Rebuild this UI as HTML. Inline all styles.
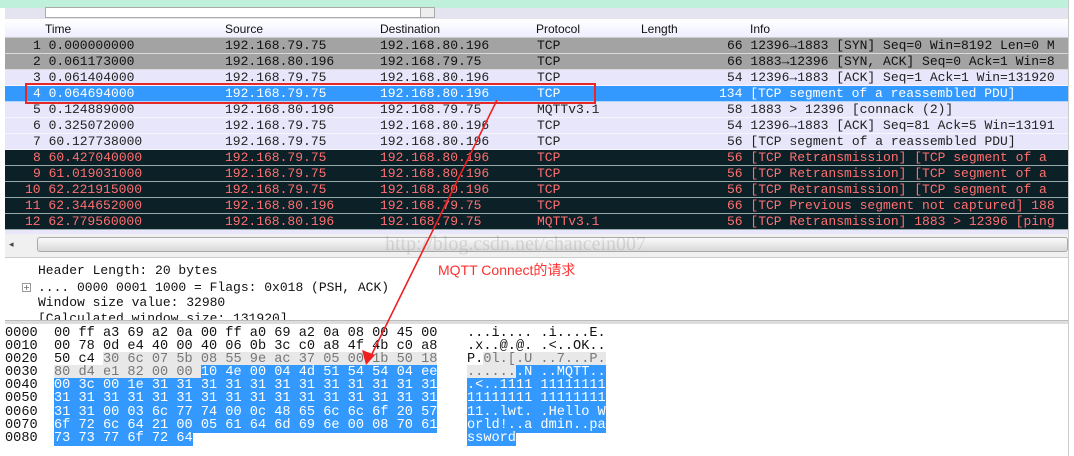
<!DOCTYPE html>
<html><head><meta charset="utf-8"><style>
*{margin:0;padding:0;box-sizing:border-box}
body{width:1074px;height:456px;background:#fff;position:relative;overflow:hidden;font-family:"Liberation Mono",monospace}
.abs{position:absolute}
.row{position:absolute;left:5px;width:1063px;height:16px;font-size:13px;line-height:16px;white-space:pre;border-bottom:1px solid rgba(255,255,255,.6)}
.row span{position:absolute;top:0}
.g{background:#a3a3a3;color:#111}
.l{background:#e8e6fa;color:#222}
.s{background:#3399ff;color:#fff}
.d{background:#0b2027;color:#ff7070;border-bottom:1px solid #9aa}
.hdr span{position:absolute;top:0;font-family:"Liberation Sans",sans-serif;font-size:12px;color:#111}
.hx{position:absolute;top:327px;font-size:13.6px;line-height:13.1px;white-space:pre;color:#111}
.b{background:#3399ff;color:#fff}
.gr{background:#e8e8e8;color:#777}
.det{position:absolute;left:38px;font-size:13px;line-height:16px;white-space:pre;color:#111}
</style></head><body>
<div class="abs" style="left:0;top:0;width:1074px;height:8px;background:#bff0dc"></div>
<div class="abs" style="left:5px;top:8px;width:1063px;height:11px;background:#e4e4f0"></div>
<div class="abs" style="left:45px;top:7px;width:390px;height:11px;background:#fff;border:1px solid #aaa"></div>
<div class="abs" style="left:420px;top:7px;width:15px;height:11px;background:#eee;border:1px solid #aaa"></div>
<div class="abs hdr" style="left:5px;top:20px;width:1063px;height:18px;background:linear-gradient(#fff,#eef);border-bottom:1px solid #ccc">
<span style="left:40px;top:2px">Time</span><span style="left:220px;top:2px">Source</span><span style="left:375px;top:2px">Destination</span><span style="left:531px;top:2px">Protocol</span><span style="left:636px;top:2px">Length</span><span style="left:745px;top:2px">Info</span></div>

<div class="row g" style="top:38px"><span style="left:28px">1 0.000000000</span><span style="left:220px">192.168.79.75</span><span style="left:375px">192.168.80.196</span><span style="left:532px">TCP</span><span style="left:722px">66 12396→1883 [SYN] Seq=0 Win=8192 Len=0 M</span></div>
<div class="row g" style="top:54px"><span style="left:28px">2 0.061173000</span><span style="left:220px">192.168.80.196</span><span style="left:375px">192.168.79.75</span><span style="left:532px">TCP</span><span style="left:722px">66 1883→12396 [SYN, ACK] Seq=0 Ack=1 Win=8</span></div>
<div class="row l" style="top:70px"><span style="left:28px">3 0.061404000</span><span style="left:220px">192.168.79.75</span><span style="left:375px">192.168.80.196</span><span style="left:532px">TCP</span><span style="left:722px">54 12396→1883 [ACK] Seq=1 Ack=1 Win=131920</span></div>
<div class="row s" style="top:86px"><span style="left:28px">4 0.064694000</span><span style="left:220px">192.168.79.75</span><span style="left:375px">192.168.80.196</span><span style="left:532px">TCP</span><span style="left:714px">134 [TCP segment of a reassembled PDU]</span></div>
<div class="row l" style="top:102px"><span style="left:28px">5 0.124889000</span><span style="left:220px">192.168.80.196</span><span style="left:375px">192.168.79.75</span><span style="left:532px">MQTTv3.1</span><span style="left:722px">58 1883 &gt; 12396 [connack (2)]</span></div>
<div class="row l" style="top:118px"><span style="left:28px">6 0.325072000</span><span style="left:220px">192.168.79.75</span><span style="left:375px">192.168.80.196</span><span style="left:532px">TCP</span><span style="left:722px">54 12396→1883 [ACK] Seq=81 Ack=5 Win=13191</span></div>
<div class="row l" style="top:134px"><span style="left:28px">7 60.127738000</span><span style="left:220px">192.168.79.75</span><span style="left:375px">192.168.80.196</span><span style="left:532px">TCP</span><span style="left:722px">56 [TCP segment of a reassembled PDU]</span></div>
<div class="row d" style="top:150px"><span style="left:28px">8 60.427040000</span><span style="left:220px">192.168.79.75</span><span style="left:375px">192.168.80.196</span><span style="left:532px">TCP</span><span style="left:722px">56 [TCP Retransmission] [TCP segment of a</span></div>
<div class="row d" style="top:166px"><span style="left:28px">9 61.019031000</span><span style="left:220px">192.168.79.75</span><span style="left:375px">192.168.80.196</span><span style="left:532px">TCP</span><span style="left:722px">56 [TCP Retransmission] [TCP segment of a</span></div>
<div class="row d" style="top:182px"><span style="left:20px">10 62.221915000</span><span style="left:220px">192.168.79.75</span><span style="left:375px">192.168.80.196</span><span style="left:532px">TCP</span><span style="left:722px">56 [TCP Retransmission] [TCP segment of a</span></div>
<div class="row d" style="top:198px"><span style="left:20px">11 62.344652000</span><span style="left:220px">192.168.80.196</span><span style="left:375px">192.168.79.75</span><span style="left:532px">TCP</span><span style="left:722px">66 [TCP Previous segment not captured] 188</span></div>
<div class="row d" style="top:214px"><span style="left:20px">12 62.779560000</span><span style="left:220px">192.168.80.196</span><span style="left:375px">192.168.79.75</span><span style="left:532px">MQTTv3.1</span><span style="left:722px">56 [TCP Retransmission] 1883 &gt; 12396 [ping</span></div>
<div class="abs" style="left:5px;top:230px;width:1063px;height:4px;background:#e8e6fa"></div>

<div class="abs" style="left:5px;top:234px;width:1063px;height:24px;background:#f0f0f0;border-bottom:1px solid #ccc"></div>
<div class="abs" style="left:9px;top:240px;font-size:9px;color:#444;font-family:'DejaVu Sans',sans-serif">◂</div>
<div class="abs" style="left:37px;top:237px;width:1031px;height:15px;background:linear-gradient(#fafafa,#d8d8d8);border:1px solid #aaa;border-radius:3px"></div>
<div class="abs" style="left:385px;top:233px;font-family:'Liberation Serif',serif;font-size:20px;color:rgba(150,150,150,.3)">http://blog.csdn.net/chancein007</div>

<div class="det" style="top:263px">Header Length: 20 bytes</div>
<div class="abs" style="left:22px;top:283px;width:9px;height:9px;border:1px solid #999;font-size:8px;line-height:7px;text-align:center;color:#555;font-family:'DejaVu Sans',sans-serif">+</div>
<div class="det" style="top:280px">.... 0000 0001 1000 = Flags: 0x018 (PSH, ACK)</div>
<div class="det" style="top:295px">Window size value: 32980</div>
<div class="det" style="top:311px;height:9px;overflow:hidden">[Calculated window size: 131920]</div>
<div class="abs" style="left:5px;top:320px;width:1063px;height:4px;background:#ddd;border-top:1px solid #bbb"></div>
<div class="abs" style="left:438px;top:260px;font-family:'Liberation Sans','Noto Sans CJK SC',sans-serif;font-size:14px;color:#ff3030">MQTT Connect的请求</div>

<div class="hx" style="left:5px">0000
0010
0020
0030
0040
0050
0060
0070
0080</div>
<div class="hx" style="left:54px">00 ff a3 69 a2 0a 00 ff a0 69 a2 0a 08 00 45 00
00 78 0d e4 40 00 40 06 0b 3c c0 a8 4f 4b c0 a8
50 c4 <span class="gr">30 6c 07 5b 08 55 9e ac 37 05 00 1b 50 18</span>
<span class="gr">80 d4 e1 82 00 00 </span><span class="b">10 4e 00 04 4d 51 54 54 04 ee</span>
<span class="b">00 3c 00 1e 31 31 31 31 31 31 31 31 31 31 31 31</span>
<span class="b">31 31 31 31 31 31 31 31 31 31 31 31 31 31 31 31</span>
<span class="b">31 31 00 03 6c 77 74 00 0c 48 65 6c 6c 6f 20 57</span>
<span class="b">6f 72 6c 64 21 00 05 61 64 6d 69 6e 00 08 70 61</span>
<span class="b">73 73 77 6f 72 64</span></div>
<div class="hx" style="left:467px">...i.... .i....E.
.x..@.@. .&lt;..OK..
P.<span class="gr">0l.[.U ..7...P.</span>
<span class="gr">......</span><span class="b">.N ..MQTT..</span>
<span class="b">.&lt;..1111 11111111</span>
<span class="b">11111111 11111111</span>
<span class="b">11..lwt. .Hello W</span>
<span class="b">orld!..a dmin..pa</span>
<span class="b">ssword</span></div>

<div class="abs" style="left:25px;top:83px;width:571px;height:21px;border:2px solid #e82828"></div>
<svg class="abs" style="left:0;top:0" width="1074" height="456"><line x1="497" y1="100" x2="370" y2="358" stroke="#ee2020" stroke-width="1.6"/><polygon points="366,365 362,350 375,355" fill="#ee2020"/></svg>
<div class="abs" style="left:1068px;top:0;width:6px;height:456px;background:#fff;border-left:1px solid #ccc"></div>
</body></html>
